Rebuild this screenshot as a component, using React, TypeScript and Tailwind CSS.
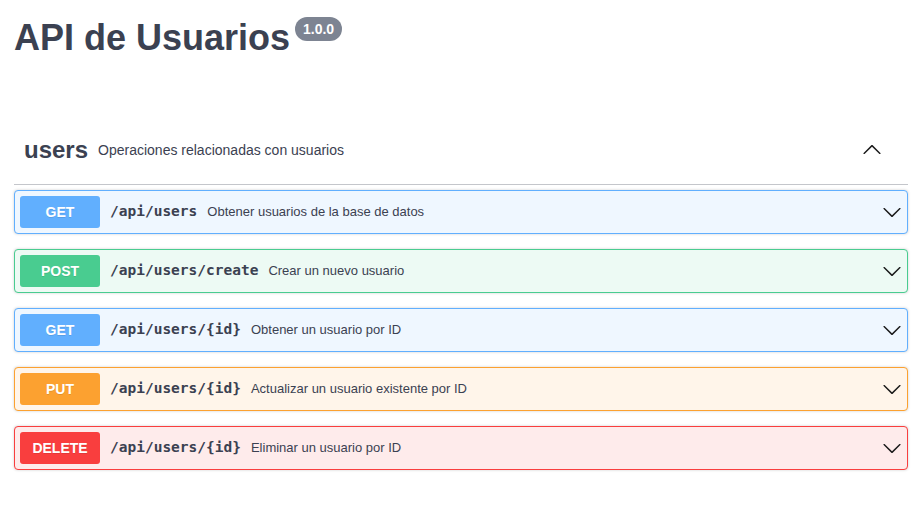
import React from "react";

type Op = {
  method: string;
  path: string;
  desc: string;
  border: string;
  bg: string;
  badge: string;
};

const ops: Op[] = [
  { method: "GET", path: "/api/users", desc: "Obtener usuarios de la base de datos", border: "border-[#61affe]", bg: "bg-[#eff7ff]", badge: "bg-[#61affe]" },
  { method: "POST", path: "/api/users/create", desc: "Crear un nuevo usuario", border: "border-[#49cc90]", bg: "bg-[#edfaf4]", badge: "bg-[#49cc90]" },
  { method: "GET", path: "/api/users/{id}", desc: "Obtener un usuario por ID", border: "border-[#61affe]", bg: "bg-[#eff7ff]", badge: "bg-[#61affe]" },
  { method: "PUT", path: "/api/users/{id}", desc: "Actualizar un usuario existente por ID", border: "border-[#fca130]", bg: "bg-[#fff5ea]", badge: "bg-[#fca130]" },
  { method: "DELETE", path: "/api/users/{id}", desc: "Eliminar un usuario por ID", border: "border-[#f93e3e]", bg: "bg-[#feebeb]", badge: "bg-[#f93e3e]" },
];

function ArrowDown({ up = false }: { up?: boolean }) {
  return (
    <svg width="20" height="20" viewBox="0 0 20 20" className={up ? "rotate-180" : ""} fill="#1a1a1a">
      <path d="M17.418 6.109c.272-.268.709-.268.979 0s.271.701 0 .969l-7.908 7.83c-.27.268-.707.268-.979 0l-7.908-7.83c-.27-.268-.27-.701 0-.969.271-.268.709-.268.979 0L10 13.25l7.418-7.141z" />
    </svg>
  );
}

export default function App() {
  return (
    <div
      className="min-h-[513px] bg-white pl-[14px] pr-[16px] text-[#3b4151]"
      style={{ fontFamily: '"Liberation Sans", Arial, sans-serif' }}
    >
      <div className="flex items-start pt-[17px]">
        <h2 className="mt-[3px] text-[36px] leading-[36px] font-bold text-[#3b4151]">API de Usuarios</h2>
        <span className="ml-[5px] flex h-[24px] w-[47px] items-center justify-center rounded-full bg-[#7d8492] text-[14px] font-bold text-white">
          1.0.0
        </span>
      </div>

      <div className="mt-[60px]">
        <div className="flex h-[69px] items-center border-b border-[#c4c6cb] pl-[10px] pr-[26px]">
          <span className="text-[24px] leading-[28px] font-bold">users</span>
          <span className="flex-1 px-[10px] text-[14px]">Operaciones relacionadas con usuarios</span>
          <ArrowDown up />
        </div>

        <div className="mt-[5px] flex flex-col gap-[15px]">
          {ops.map((op, i) => (
            <div
              key={i}
              className={`flex h-[44px] items-center rounded-[4px] border ${op.border} ${op.bg} p-[5px] shadow-[0_0_3px_rgba(0,0,0,0.19)]`}
            >
              <span
                className={`flex h-[32px] w-[80px] items-center justify-center rounded-[3px] ${op.badge} text-[14px] font-bold text-white [text-shadow:0_1px_0_rgba(0,0,0,0.1)]`}
              >
                {op.method}
              </span>
              <span
                className="px-[10px] text-[14.5px] font-bold text-[#3b4151]"
                style={{ fontFamily: '"DejaVu Sans Mono", monospace' }}
              >
                {op.path}
              </span>
              <span className="flex-1 text-[13px] text-[#3b4151]">{op.desc}</span>
              <ArrowDown />
            </div>
          ))}
        </div>
      </div>
    </div>
  );
}
